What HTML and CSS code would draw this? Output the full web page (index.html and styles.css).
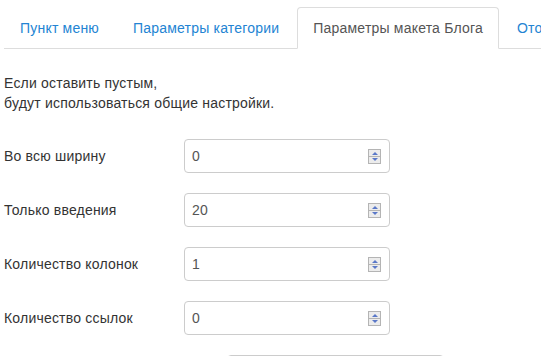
FILE: index.html
```html
<!DOCTYPE html>
<html lang="ru">
<head>
  <meta charset="UTF-8">
  <title>Параметры макета Блога</title>
  <link rel="stylesheet" href="styles.css">
</head>
<body>

  <ul class="nav-tabs">
    <li><a href="#">Пункт меню</a></li>
    <li><a href="#">Параметры категории</a></li>
    <li class="active"><a href="#">Параметры макета Блога</a></li>
    <li><a href="#">Отображение</a></li>
  </ul>

  <div class="tab-content">
    <p class="intro">Если оставить пустым,<br>будут использоваться общие настройки.</p>

    <div class="form-group">
      <label>Во всю ширину</label>
      <div class="field"><span class="value">0</span><span class="spin"><i class="up"></i><i class="down"></i></span></div>
    </div>

    <div class="form-group">
      <label>Только введения</label>
      <div class="field"><span class="value">20</span><span class="spin"><i class="up"></i><i class="down"></i></span></div>
    </div>

    <div class="form-group">
      <label>Количество колонок</label>
      <div class="field"><span class="value">1</span><span class="spin"><i class="up"></i><i class="down"></i></span></div>
    </div>

    <div class="form-group">
      <label>Количество ссылок</label>
      <div class="field"><span class="value">0</span><span class="spin"><i class="up"></i><i class="down"></i></span></div>
    </div>

    <div class="form-group next">
      <div class="select"></div>
    </div>
  </div>

</body>
</html>
```

FILE: styles.css
```css
html, body {
  height: 356px;
  overflow: hidden;
}

body {
  margin: 0;
  padding: 7px 0 0 4px;
  font-family: "Liberation Sans", Arial, sans-serif;
  font-size: 14px;
  line-height: 20px;
  letter-spacing: 0.2px;
  color: #333;
  background: #fff;
}

.nav-tabs {
  display: flex;
  list-style: none;
  margin: 0;
  padding: 0;
  border-bottom: 1px solid #ddd;
  white-space: nowrap;
}

.nav-tabs li {
  margin: 0 2px -1px 0;
}

.nav-tabs a {
  display: block;
  padding: 10px 15px;
  border: 1px solid transparent;
  border-radius: 4px 4px 0 0;
  color: #2384d3;
  text-decoration: none;
}

.nav-tabs .active a {
  color: #555;
  background: #fff;
  border-color: #ddd #ddd transparent;
}

.tab-content {
  padding-top: 24px;
}

.intro {
  margin: 0 0 26px;
}

.form-group {
  display: flex;
  align-items: center;
  margin-bottom: 20px;
}

.form-group label {
  width: 180px;
  flex: none;
}

.field {
  width: 206px;
  height: 34px;
  box-sizing: border-box;
  border: 1px solid #ccc;
  border-radius: 4px;
  display: flex;
  align-items: center;
  justify-content: space-between;
  padding: 0 8px 0 7px;
  color: #555;
}

.spin {
  display: flex;
  flex-direction: column;
  width: 13px;
  height: 15px;
}

.spin i {
  position: relative;
  flex: 1;
  box-sizing: border-box;
  border: 1px solid #b4b4b4;
  background: #ececec;
}

.spin .down {
  border-top: none;
}

.spin i::after {
  content: "";
  position: absolute;
  left: 3px;
  top: 2px;
  border-left: 3px solid transparent;
  border-right: 3px solid transparent;
}

.spin .up::after {
  border-bottom: 3px solid #5a78c8;
}

.spin .down::after {
  top: 1px;
  border-top: 3px solid #5a78c8;
}

.next {
  padding-left: 223px;
}

.select {
  width: 215px;
  height: 34px;
  border: 1px solid #ccc;
  border-radius: 4px;
}
```
